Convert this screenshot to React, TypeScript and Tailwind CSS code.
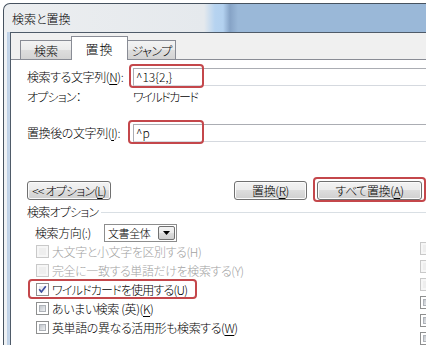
import React from "react";

const U = ({ c }: { c: string }) => (
  <span className="underline underline-offset-[2px] decoration-[1px]">{c}</span>
);

function Box({ state }: { state: "disabled" | "off" | "on" }) {
  if (state === "disabled")
    return (
      <span className="block w-[13px] h-[13px] shrink-0 border border-[#c9c9c9] bg-[#f6f6f6] p-[2px]">
        <span className="block w-full h-full bg-[#eeeeee]" />
      </span>
    );
  return (
    <span className="relative block w-[13px] h-[13px] shrink-0 border border-[#8e8f8f] bg-white p-[2px]">
      {state === "on" ? (
        <span className="block w-full h-full bg-[linear-gradient(135deg,#e4e6ea,#fafafa)]" />
      ) : (
        <span className="block w-full h-full border border-[#aeb2b8] bg-[linear-gradient(135deg,#c3c7cd,#eef0f2)]" />
      )}
      {state === "on" && (
        <svg className="absolute left-[-1px] top-[-1px]" width="13" height="13" viewBox="0 0 13 13">
          <path d="M3.2 6.3 L5.4 9 L9.8 3.2" stroke="#3d4f9f" strokeWidth="1.7" fill="none" />
        </svg>
      )}
    </span>
  );
}

const btn =
  "h-[19px] flex items-center justify-center rounded-[3px] border border-[#707070] bg-[linear-gradient(180deg,#f3f3f3_0%,#ebebeb_50%,#dddddd_50%,#cfcfcf_100%)] shadow-[inset_0_0_0_1px_#fbfbfb] text-[12px] leading-[16px] text-black whitespace-nowrap";

export default function App() {
  return (
    <div className="relative w-[429px] h-[345px] overflow-hidden bg-white pt-[3px] pl-[3px] font-['Noto_Sans_CJK_JP',sans-serif] font-light [font-feature-settings:'palt'] text-black">
      <div className="w-[423px] h-[342px] overflow-hidden flex flex-col border-t border-l border-[#46525f] rounded-tl-[7px] bg-[linear-gradient(90deg,#eceef0_0px,#e5e9ed_200px,#b6d3f0_211px,#b3d1ef_219px,#86a3c6_226px,#9ab8d8_234px,#9ab8d8_100%)]">
        {/* title bar */}
        <div className="h-[28px] shrink-0 flex items-center pl-[8px] text-[12px] leading-[16px] pt-[1px]">
          <span>検索と置換</span>
        </div>
        <div className="flex-1 flex min-h-0">
          {/* left frame */}
          <div className="w-[6px] shrink-0 bg-[linear-gradient(90deg,#eef1f4_0px,#eef1f4_3px,#bccfe5_3px,#c6d7ea_6px)]" />
          {/* client */}
          <div className="flex-1 flex flex-col border-l border-t border-[#4f5b69] bg-[#f0f0f0] min-w-0">
            {/* tab strip */}
            <div className="h-[26px] shrink-0 flex items-end pl-[9px]">
              <div className="w-[52px] h-[19px] border-t border-l border-r border-[#898c95] bg-[linear-gradient(180deg,#f3f3f3_0%,#ebebeb_50%,#dddddd_50%,#d3d3d3_100%)] flex items-center justify-center text-[12px] leading-[16px] pt-[2px]">
                <span>検索</span>
              </div>
              <div className="relative z-10 ml-[-1px] mb-[-1px] w-[57px] h-[24px] border-t border-l border-r border-[#898c95] bg-white flex items-center justify-center text-[13px] leading-[16px] tracking-[1px] pt-[1px]">
                <span>置換</span>
              </div>
              <div className="ml-[-1px] w-[49px] h-[19px] border-t border-l border-r border-[#898c95] bg-[linear-gradient(180deg,#f3f3f3_0%,#ebebeb_50%,#dddddd_50%,#d3d3d3_100%)] flex items-center justify-center text-[12px] leading-[16px] pt-[2px] tracking-[-0.5px]">
                <span>ジャンプ</span>
              </div>
            </div>
            {/* panel */}
            <div className="flex-1 border-t border-[#898c95] bg-white pl-[16px] pt-[8px] text-[12px] leading-[16px] tracking-[-0.4px]">
              <div className="h-[18px] flex items-center">
                <div className="w-[106px] shrink-0 whitespace-nowrap">
                  検索する文字列(<U c="N" />):
                </div>
                <div className="flex-1 h-[18px] border border-r-0 border-[#abadb3] border-b-[#d5d9df] flex items-center pl-[2px] tracking-normal">
                  <span>^13{"{"}2,{"}"}</span>
                </div>
              </div>
              <div className="mt-[3px] h-[16px] flex items-center">
                <div className="w-[106px] shrink-0 tracking-[-0.8px]">オプション：</div>
                <div className="tracking-[-1.4px]">ワイルドカード</div>
              </div>
              <div className="mt-[19px] h-[18px] flex items-center">
                <div className="w-[106px] shrink-0 whitespace-nowrap">
                  置換後の文字列(<U c="I" />):
                </div>
                <div className="flex-1 h-[18px] border border-r-0 border-[#abadb3] border-b-[#d5d9df] flex items-center pl-[2px] tracking-normal">
                  <span>^p</span>
                </div>
              </div>
              <div className="mt-[39px] flex">
                <div className={btn + " w-[84px]"}>
                  <span className="tracking-[-0.8px]">
                    &lt;&lt; オプション(<U c="L" />)
                  </span>
                </div>
                <div className={btn + " ml-[123px] w-[73px]"}>
                  <span>
                    置換(<U c="R" />)
                  </span>
                </div>
                <div className={btn + " ml-[10px] w-[105px]"}>
                  <span>
                    すべて置換(<U c="A" />)
                  </span>
                </div>
              </div>
              <div className="mt-[4px] h-[16px] flex items-center">
                <span className="whitespace-nowrap tracking-[-0.8px]">検索オプション</span>
                <span className="flex-1 ml-[3px] h-px bg-[#d9dfe4]" />
              </div>
              <div className="mt-[4px] flex">
                <div className="w-[393px] shrink-0">
                  <div className="h-[18px] flex items-center pl-[8px]">
                    <div className="w-[69px] shrink-0 whitespace-nowrap">検索方向(:)</div>
                    <div className="w-[73px] h-[18px] border border-[#8d8d8d] bg-white flex items-center">
                      <span className="flex-1 pl-[3px] text-[11px] leading-[16px] whitespace-nowrap">文書全体</span>
                      <span className="w-[17px] h-[14px] mr-px border border-[#707070] rounded-[2px] bg-[linear-gradient(180deg,#f3f3f3_0%,#ebebeb_50%,#dddddd_50%,#cfcfcf_100%)] flex items-center justify-center">
                        <svg width="7" height="4" viewBox="0 0 7 4">
                          <path d="M0 0 H7 L3.5 4 Z" fill="#000" />
                        </svg>
                      </span>
                    </div>
                  </div>
                  <div className="h-[19px] flex items-center pl-[9px] gap-[3px] text-[#a2a2a2]">
                    <Box state="disabled" />
                    <span className="whitespace-nowrap">大文字と小文字を区別する(H)</span>
                  </div>
                  <div className="h-[19px] flex items-center pl-[9px] gap-[3px] text-[#a2a2a2]">
                    <Box state="disabled" />
                    <span className="whitespace-nowrap">完全に一致する単語だけを検索する(Y)</span>
                  </div>
                  <div className="h-[19px] flex items-center pl-[9px] gap-[3px]">
                    <Box state="on" />
                    <span className="whitespace-nowrap tracking-[-0.8px]">
                      ワイルドカードを使用する(<U c="U" />)
                    </span>
                  </div>
                  <div className="h-[19px] flex items-center pl-[9px] gap-[3px]">
                    <Box state="off" />
                    <span className="whitespace-nowrap">
                      あいまい検索 (英)(<U c="K" />)
                    </span>
                  </div>
                  <div className="h-[19px] flex items-center pl-[9px] gap-[3px]">
                    <Box state="off" />
                    <span className="whitespace-nowrap">
                      英単語の異なる活用形も検索する(<U c="W" />)
                    </span>
                  </div>
                </div>
                <div className="pt-[15px] shrink-0">
                  <div className="h-[18px] flex items-center"><Box state="disabled" /></div>
                  <div className="h-[18px] flex items-center"><Box state="disabled" /></div>
                  <div className="h-[18px] flex items-center"><Box state="disabled" /></div>
                  <div className="h-[18px] flex items-center"><Box state="off" /></div>
                  <div className="h-[18px] flex items-center"><Box state="off" /></div>
                  <div className="h-[18px] flex items-center"><Box state="off" /></div>
                </div>
              </div>
            </div>
          </div>
        </div>
      </div>
      {/* red highlight annotations */}
      <div className="absolute left-[129px] top-[64px] w-[75px] h-[24px] border-2 border-[#c4474b] rounded-[4px]" />
      <div className="absolute left-[128px] top-[120px] w-[76px] h-[24px] border-2 border-[#c4474b] rounded-[4px]" />
      <div className="absolute left-[313px] top-[177px] w-[113px] h-[25px] border-2 border-[#c4474b] rounded-[4px]" />
      <div className="absolute left-[28px] top-[279px] w-[169px] h-[20px] border-2 border-[#c4474b] rounded-[4px]" />
    </div>
  );
}
